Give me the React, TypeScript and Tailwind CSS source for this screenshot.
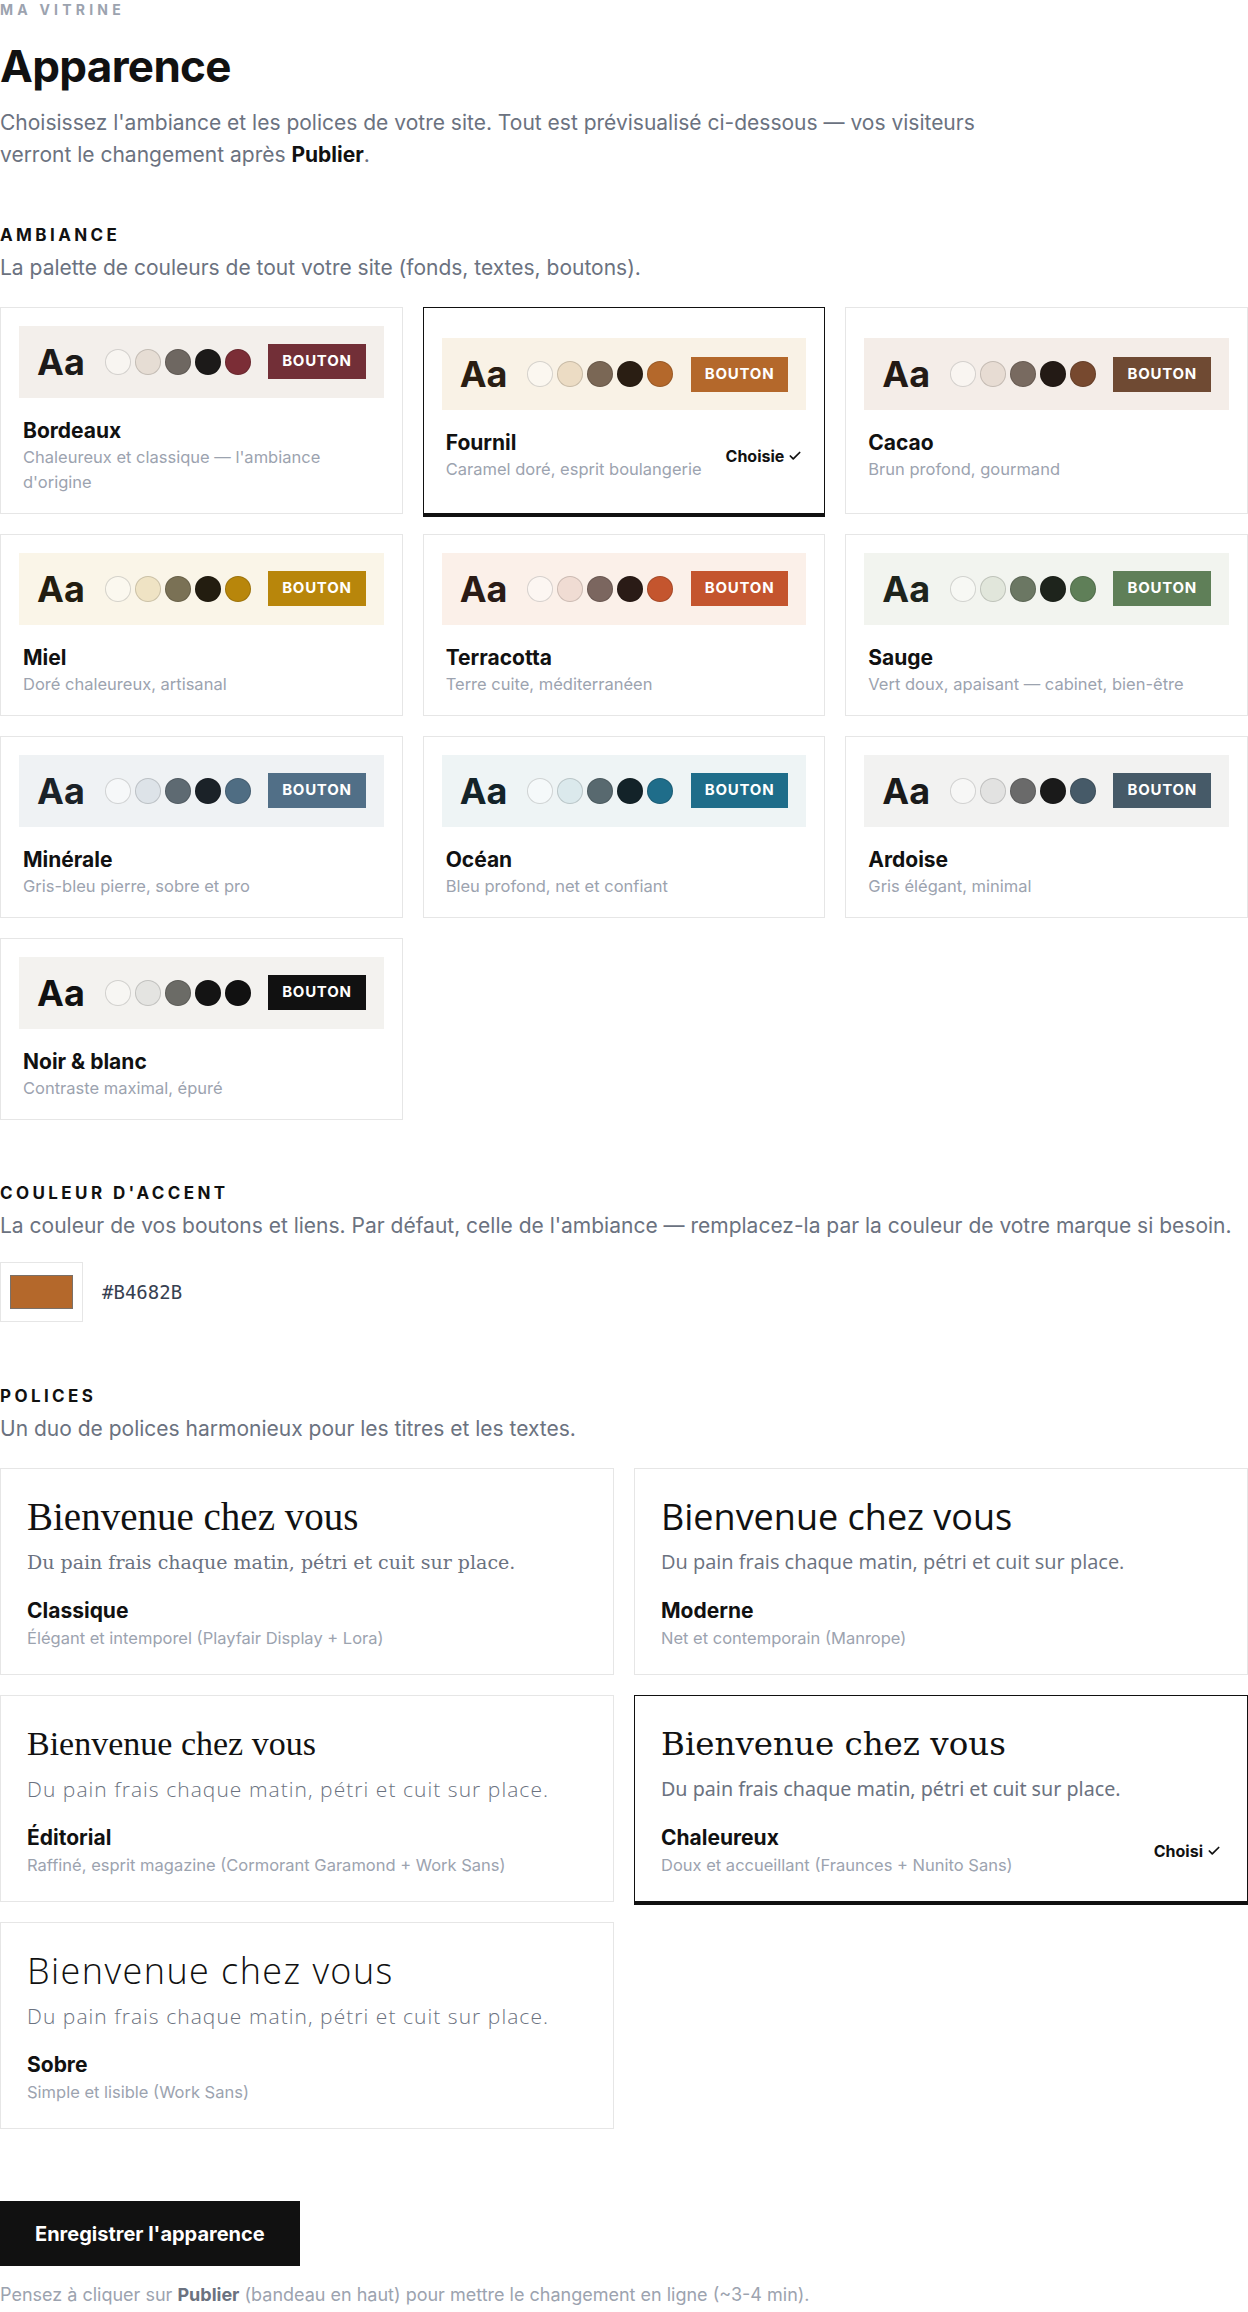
import { Check } from "lucide-react";

const ambiances = [
  {
    name: "Bordeaux",
    desc: "Chaleureux et classique — l'ambiance d'origine",
    bg: "bg-[#f3efeb]",
    ink: "text-[#1c1a19]",
    dots: ["bg-[#f8f5f1]", "bg-[#e6ddd4]", "bg-[#6e6761]", "bg-[#1c1a19]", "bg-[#7b2d36]"],
    btn: "bg-[#722f37]",
  },
  {
    name: "Fournil",
    desc: "Caramel doré, esprit boulangerie",
    bg: "bg-[#f9f2e6]",
    ink: "text-[#2a1e13]",
    dots: ["bg-[#fbf7f0]", "bg-[#ecdcc4]", "bg-[#7a6755]", "bg-[#2a1e13]", "bg-[#b4682b]"],
    btn: "bg-[#b4682b]",
    selected: true,
  },
  {
    name: "Cacao",
    desc: "Brun profond, gourmand",
    bg: "bg-[#f4ede8]",
    ink: "text-[#231a15]",
    dots: ["bg-[#f9f5f1]", "bg-[#e7dcd3]", "bg-[#786a60]", "bg-[#231a15]", "bg-[#77492f]"],
    btn: "bg-[#6f4a33]",
  },
  {
    name: "Miel",
    desc: "Doré chaleureux, artisanal",
    bg: "bg-[#faf5e8]",
    ink: "text-[#231d10]",
    dots: ["bg-[#fbf8ef]", "bg-[#efe3c4]", "bg-[#7a7155]", "bg-[#231d10]", "bg-[#b8860b]"],
    btn: "bg-[#b8860b]",
  },
  {
    name: "Terracotta",
    desc: "Terre cuite, méditerranéen",
    bg: "bg-[#fbf0e9]",
    ink: "text-[#2a1b16]",
    dots: ["bg-[#fcf6f2]", "bg-[#f0dcd3]", "bg-[#7b665f]", "bg-[#2a1b16]", "bg-[#c4552e]"],
    btn: "bg-[#c4552e]",
  },
  {
    name: "Sauge",
    desc: "Vert doux, apaisant — cabinet, bien-être",
    bg: "bg-[#f2f4ef]",
    ink: "text-[#1e241c]",
    dots: ["bg-[#f7f8f4]", "bg-[#e1e6db]", "bg-[#6b7763]", "bg-[#1e241c]", "bg-[#5f7f58]"],
    btn: "bg-[#5f7f58]",
  },
  {
    name: "Minérale",
    desc: "Gris-bleu pierre, sobre et pro",
    bg: "bg-[#eff2f4]",
    ink: "text-[#1b2228]",
    dots: ["bg-[#f6f8f9]", "bg-[#dde3e8]", "bg-[#5e6a72]", "bg-[#1b2228]", "bg-[#4f6d83]"],
    btn: "bg-[#516f87]",
  },
  {
    name: "Océan",
    desc: "Bleu profond, net et confiant",
    bg: "bg-[#eef4f5]",
    ink: "text-[#132329]",
    dots: ["bg-[#f5f9fa]", "bg-[#dbe9ec]", "bg-[#58696f]", "bg-[#132329]", "bg-[#1f6d8a]"],
    btn: "bg-[#1f6d8a]",
  },
  {
    name: "Ardoise",
    desc: "Gris élégant, minimal",
    bg: "bg-[#f2f2f1]",
    ink: "text-[#1a1a1a]",
    dots: ["bg-[#f7f7f6]", "bg-[#e2e2e1]", "bg-[#6a6a6a]", "bg-[#1a1a1a]", "bg-[#465a68]"],
    btn: "bg-[#465a68]",
  },
  {
    name: "Noir & blanc",
    desc: "Contraste maximal, épuré",
    bg: "bg-[#f3f2ef]",
    ink: "text-[#111111]",
    dots: ["bg-[#f7f6f3]", "bg-[#e4e4e1]", "bg-[#6b6b66]", "bg-[#141414]", "bg-[#111111]"],
    btn: "bg-[#111111]",
  },
];

const fonts = [
  {
    name: "Classique",
    desc: "Élégant et intemporel (Playfair Display + Lora)",
    heading: "font-['Liberation_Serif',serif] text-[39px]",
    body: "font-['DejaVu_Serif',serif] text-[19px]",
  },
  {
    name: "Moderne",
    desc: "Net et contemporain (Manrope)",
    heading: "font-['Open_Sans',sans-serif] text-[36px]",
    body: "font-['Open_Sans',sans-serif] text-[20px]",
  },
  {
    name: "Éditorial",
    desc: "Raffiné, esprit magazine (Cormorant Garamond + Work Sans)",
    heading: "font-['Liberation_Serif',serif] text-[34px]",
    body: "font-['Open_Sans',sans-serif] font-light text-[21px] tracking-[0.05em]",
  },
  {
    name: "Chaleureux",
    desc: "Doux et accueillant (Fraunces + Nunito Sans)",
    heading: "font-['DejaVu_Serif',serif] text-[32.5px]",
    body: "font-['Noto_Sans',sans-serif] text-[19.7px]",
    selected: true,
  },
  {
    name: "Sobre",
    desc: "Simple et lisible (Work Sans)",
    heading: "font-['Open_Sans',sans-serif] font-light text-[36px] tracking-[0.04em]",
    body: "font-['Open_Sans',sans-serif] font-light text-[21px] tracking-[0.05em]",
  },
];

function Label({ children }: { children: React.ReactNode }) {
  return (
    <h2 className="text-[17px] font-bold uppercase leading-[22px] tracking-[0.2em] text-[#111]">
      {children}
    </h2>
  );
}

function Hint({ children }: { children: React.ReactNode }) {
  return <p className="mt-2 text-[21px] leading-[28.8px] text-[#6b7280]">{children}</p>;
}

function Chosen({ label }: { label: string }) {
  return (
    <span className="flex shrink-0 items-center gap-1 text-[16px] font-bold text-[#111]">
      {label}
      <Check className="h-3.5 w-3.5" strokeWidth={3} />
    </span>
  );
}

function AmbianceCard({ a }: { a: (typeof ambiances)[number] }) {
  return (
    <div
      className={`flex flex-col justify-center border bg-white p-[18px] ${
        a.selected ? "border-[#111] shadow-[0_3px_0_0_#111]" : "border-[#e6e6e6]"
      }`}
    >
      {/* Preview */}
      <div className={`flex h-[72px] items-center justify-between px-[18px] ${a.bg}`}>
        <div className="flex items-center gap-5">
          <span className={`text-[36px] font-bold leading-none ${a.ink}`}>Aa</span>
          <div className="flex gap-1">
            {a.dots.map((d, i) => (
              <span key={i} className={`h-[26px] w-[26px] rounded-full border border-black/15 ${d}`} />
            ))}
          </div>
        </div>
        <span
          className={`flex h-[35px] items-center px-[14px] text-[15px] font-bold tracking-[0.05em] text-white ${a.btn}`}
        >
          BOUTON
        </span>
      </div>

      {/* Name + description */}
      <div className="mt-[19px] flex items-center justify-between gap-3 px-1">
        <div>
          <p className="text-[21px] font-bold leading-[28px] text-[#111]">{a.name}</p>
          <p className="text-[16.5px] leading-[25px] text-[#9ca3af]">{a.desc}</p>
        </div>
        {a.selected && <Chosen label="Choisie" />}
      </div>
    </div>
  );
}

function FontCard({ f }: { f: (typeof fonts)[number] }) {
  return (
    <div
      className={`border bg-white px-[26px] pt-[26px] pb-[23px] ${
        f.selected ? "border-[#111] shadow-[0_3px_0_0_#111]" : "border-[#e6e6e6]"
      }`}
    >
      <p className={`leading-[44px] text-[#111] ${f.heading}`}>Bienvenue chez vous</p>
      <p className={`mt-[9px] leading-[28px] text-[#6b7280] ${f.body}`}>
        Du pain frais chaque matin, pétri et cuit sur place.
      </p>
      <div className="mt-[21px] flex items-center justify-between gap-3">
        <div>
          <p className="text-[21px] font-bold leading-[28px] text-[#111]">{f.name}</p>
          <p className="mt-px text-[16.5px] leading-[25px] text-[#9ca3af]">{f.desc}</p>
        </div>
        {f.selected && <Chosen label="Choisi" />}
      </div>
    </div>
  );
}

export default function App() {
  return (
    <div className="min-h-[2312px] bg-white font-['Inter',sans-serif] text-[#111]">
      {/* Header */}
      <p className="text-[14px] font-bold uppercase leading-5 tracking-[0.3em] text-[#9ca3af]">Ma vitrine</p>
      <h1 className="mt-[22px] text-[44px] font-bold leading-[48px] tracking-[-0.015em]">Apparence</h1>
      <p className="mt-[17px] max-w-[1020px] text-[21px] leading-[32.4px] text-[#6b7280]">
        Choisissez l'ambiance et les polices de votre site. Tout est prévisualisé ci-dessous — vos visiteurs
        verront le changement après <strong className="font-bold text-[#111]">Publier</strong>.
      </p>

      {/* Ambiance */}
      <section className="mt-[52px]">
        <Label>Ambiance</Label>
        <Hint>La palette de couleurs de tout votre site (fonds, textes, boutons).</Hint>
        <div className="mt-6 grid grid-cols-3 gap-5">
          {ambiances.map((a) => (
            <AmbianceCard key={a.name} a={a} />
          ))}
        </div>
      </section>

      {/* Accent */}
      <section className="mt-[62px]">
        <Label>Couleur d'accent</Label>
        <Hint>
          La couleur de vos boutons et liens. Par défaut, celle de l'ambiance — remplacez-la par la couleur de votre
          marque si besoin.
        </Hint>
        <div className="mt-[22px] flex items-center gap-[19px]">
          <div className="flex h-[60px] w-[83px] items-center justify-center border border-[#e6e6e6] bg-white">
            <div className="h-[34px] w-[63px] border border-[#7a7068] bg-[#b4682b]" />
          </div>
          <span className="font-['DejaVu_Sans_Mono',monospace] text-[19px] text-[#374151]">#B4682B</span>
        </div>
      </section>

      {/* Polices */}
      <section className="mt-[63px]">
        <Label>Polices</Label>
        <Hint>Un duo de polices harmonieux pour les titres et les textes.</Hint>
        <div className="mt-6 grid grid-cols-2 gap-5">
          {fonts.map((f) => (
            <FontCard key={f.name} f={f} />
          ))}
        </div>
      </section>

      {/* Save */}
      <button className="mt-[72px] flex h-[65px] items-center bg-[#111] px-[35px] text-[20px] font-bold text-white">
        Enregistrer l'apparence
      </button>
      <p className="mt-[17px] text-[18px] leading-6 text-[#9ca3af]">
        Pensez à cliquer sur <strong className="font-bold text-[#6b7280]">Publier</strong> (bandeau en haut) pour
        mettre le changement en ligne (~3-4 min).
      </p>
    </div>
  );
}
